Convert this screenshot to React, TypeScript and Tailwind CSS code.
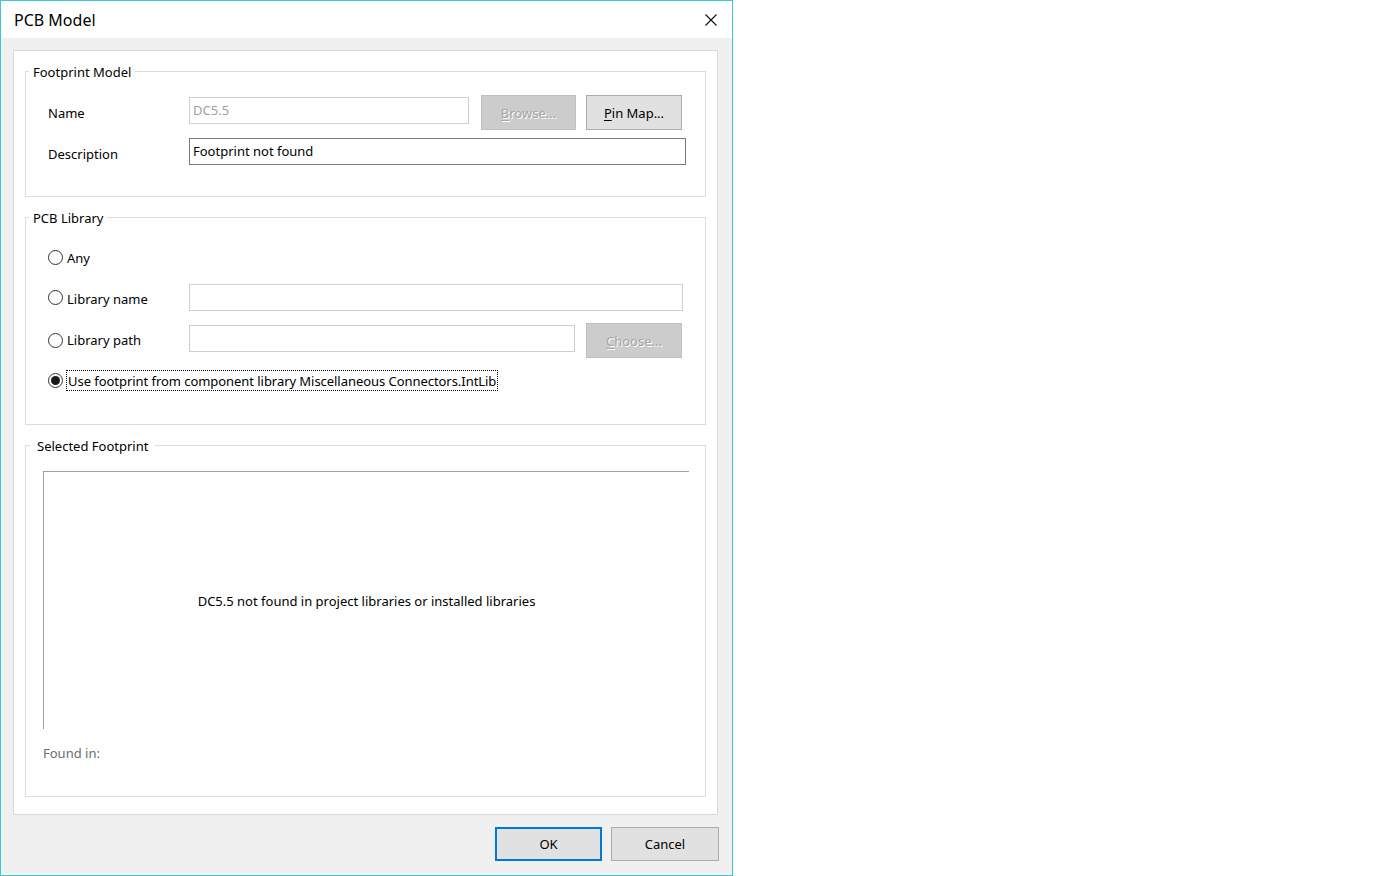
import React from 'react';

const Radio = ({ checked }: { checked?: boolean }) => (
  <span className="w-[15px] h-[15px] rounded-full border border-[#333333] bg-white flex items-center justify-center shrink-0">
    {checked && <span className="w-[9px] h-[9px] rounded-full bg-[#1a1a1a]" />}
  </span>
);

const Legend = ({ children, wide }: { children: React.ReactNode; wide?: boolean }) => (
  <legend className={`leading-[18px] ${wide ? 'ml-[4px] px-[7px]' : 'ml-[3px] px-[4px]'}`}>
    <span className="inline-block translate-y-[1px]">{children}</span>
  </legend>
);

const Mnemonic = ({ ch, rest }: { ch: string; rest: string }) => (
  <span className="inline-block translate-y-[1px]">
    <span className="underline underline-offset-2">{ch}</span>
    {rest}
  </span>
);

const App: React.FC = () => {
  return (
    <div className="min-h-screen bg-white font-['Noto_Sans',sans-serif] text-[13px] text-black">
      <div className="w-[733px] h-[876px] border border-[#3fc7cf] bg-[#f0f0f0] flex flex-col">
        {/* title bar */}
        <div className="h-[37px] bg-white flex items-center justify-between pl-[13px] pr-[15px] shrink-0">
          <span className="text-[16px]">PCB Model</span>
          <svg width="12" height="12" viewBox="0 0 12 12" className="mt-[1px]">
            <path d="M0.5 0.5 L11.5 11.5 M11.5 0.5 L0.5 11.5" stroke="#111" strokeWidth="1.1" />
          </svg>
        </div>

        <div className="flex-1 flex flex-col pt-[12px] pl-[12px] pr-[14px]">
          <div className="h-[765px] bg-white border border-[#d9d9d9] flex flex-col px-[11px] pt-[11px]">
            {/* Footprint Model */}
            <fieldset className="h-[135px] border border-[#dcdcdc]">
              <Legend>Footprint Model</Legend>
              <div className="pt-[15px] pl-[22px] flex flex-col">
                <div className="flex items-start h-[35px]">
                  <span className="w-[141px] mt-[9px]">Name</span>
                  <div className="w-[280px] h-[27px] mt-[2px] border border-[#cfcfcf] pl-[3px] flex items-center text-[#a0a0a0]">
                    DC5.5
                  </div>
                  <button className="ml-[12px] w-[95px] h-[35px] bg-[#cccccc] border border-[#bfbfbf] text-[#a6a6a6] [text-shadow:1px_1px_0_#ffffff]">
                    <Mnemonic ch="B" rest="rowse..." />
                  </button>
                  <button className="ml-[10px] w-[96px] h-[35px] bg-[#e1e1e1] border border-[#adadad]">
                    <Mnemonic ch="P" rest="in Map..." />
                  </button>
                </div>
                <div className="flex items-center mt-[8px]">
                  <span className="w-[141px] mt-[6px]">Description</span>
                  <div className="w-[497px] h-[27px] border border-[#7a7a7a] pl-[3px] flex items-center">
                    Footprint not found
                  </div>
                </div>
              </div>
            </fieldset>

            {/* PCB Library */}
            <fieldset className="mt-[11px] h-[217px] border border-[#dcdcdc]">
              <Legend>PCB Library</Legend>
              <div className="pt-[18px] pl-[22px] flex flex-col">
                <div className="h-[27px] flex items-center gap-[4px]">
                  <Radio />
                  <span className="translate-y-[1px]">Any</span>
                </div>
                <div className="mt-[13px] h-[27px] flex items-center">
                  <div className="w-[141px] flex items-center gap-[4px]">
                    <Radio />
                    <span className="translate-y-[2px]">Library name</span>
                  </div>
                  <div className="w-[494px] h-[27px] border border-[#cfcfcf]" />
                </div>
                <div className="mt-[12px] h-[35px] flex items-center">
                  <div className="w-[141px] flex items-center gap-[4px]">
                    <Radio />
                    <span>Library path</span>
                  </div>
                  <div className="w-[386px] h-[27px] border border-[#cfcfcf] -translate-y-[2px]" />
                  <button className="ml-[11px] w-[96px] h-[35px] bg-[#cccccc] border border-[#bfbfbf] text-[#a6a6a6] [text-shadow:1px_1px_0_#ffffff]">
                    <Mnemonic ch="C" rest="hoose..." />
                  </button>
                </div>
                <div className="mt-[12px] h-[21px] flex items-center gap-[3px]">
                  <Radio checked />
                  <span className="h-[21px] flex items-center px-[1px] pt-[2px] border border-dotted border-black tracking-[-0.05px]">
                    Use footprint from component library Miscellaneous Connectors.IntLib
                  </span>
                </div>
              </div>
            </fieldset>

            {/* Selected Footprint */}
            <fieldset className="mt-[11px] h-[361px] border border-[#dcdcdc]">
              <Legend wide>Selected Footprint</Legend>
              <div className="pt-[17px] pl-[17px] flex flex-col">
                <div className="w-[646px] h-[258px] border-t border-l border-[#a0a0a0] flex items-center justify-center pt-[2px]">
                  DC5.5 not found in project libraries or installed libraries
                </div>
                <span className="mt-[15px] text-[#6d6d6d]">Found in:</span>
              </div>
            </fieldset>
          </div>

          <div className="flex justify-end gap-[9px] pt-[12px] -mr-[1px]">
            <button className="w-[107px] h-[34px] bg-[#e1e1e1] border-2 border-[#0078d7] pt-[2px]">OK</button>
            <button className="w-[108px] h-[34px] bg-[#e1e1e1] border border-[#adadad] pt-[2px]">Cancel</button>
          </div>
        </div>
      </div>
    </div>
  );
};

export default App;
